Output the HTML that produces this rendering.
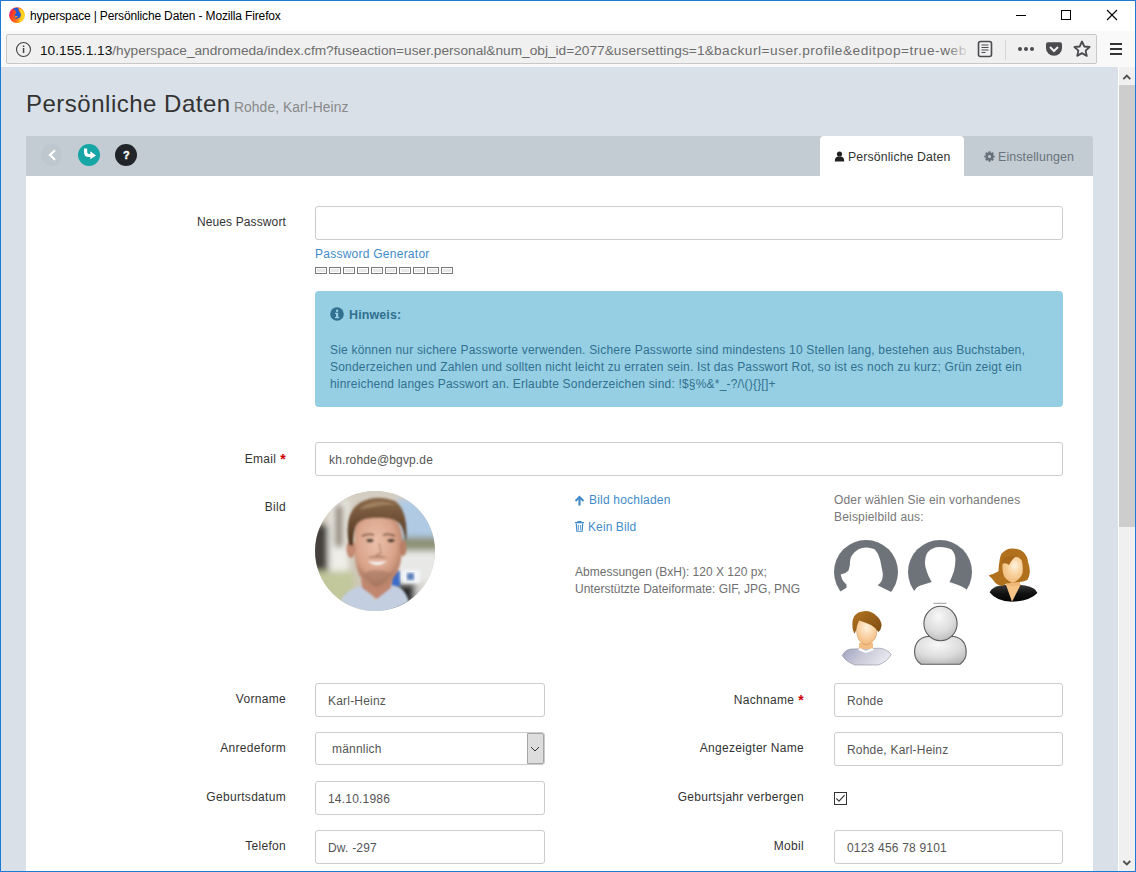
<!DOCTYPE html>
<html><head><meta charset="utf-8">
<style>
*{box-sizing:border-box;margin:0;padding:0}
html,body{width:1136px;height:872px;overflow:hidden;background:#fff;font-family:"Liberation Sans",sans-serif}
.a{position:absolute}
#win{position:absolute;left:0;top:0;width:1136px;height:872px;overflow:hidden}
#bd{position:absolute;left:0;top:0;width:1136px;height:872px;border:1px solid #1a7ad4}
.t{position:absolute;white-space:nowrap;line-height:1}
.lbl{position:absolute;white-space:nowrap;font-size:12px;color:#333;text-align:right;line-height:14px;letter-spacing:0.3px}
.inp{position:absolute;border:1px solid #ccc;border-radius:3px;background:#fff}
.val{position:absolute;white-space:nowrap;font-size:12px;color:#555;line-height:14px;letter-spacing:0.2px}
.req{color:#cc0000;font-weight:bold;margin-left:4px;font-size:14px;position:relative;top:1px}
</style></head><body>
<div id="win">
<!-- title bar -->
<div class="a" style="left:0;top:0;width:1134px;height:66px;background:#fff"></div>
<svg class="a" style="left:9px;top:7px" width="16" height="16" viewBox="0 0 16 16">
  <defs><linearGradient id="ff" x1="0" y1="0.3" x2="1" y2="0.7"><stop offset="0" stop-color="#d7158f"/><stop offset=".2" stop-color="#ff3a2a"/><stop offset=".55" stop-color="#ff6a1a"/><stop offset=".75" stop-color="#ffb21a"/><stop offset="1" stop-color="#ffd81f"/></linearGradient></defs>
  <circle cx="8" cy="8.2" r="7.9" fill="url(#ff)"/>
  <path d="M9.3 1 Q14.5 2.5 15.5 8 Q15 13 10.5 15 Q13 11 12 7 Q11 3 9.3 1Z" fill="#ffd21f"/>
  <path d="M3.8 2 Q6.5 0.6 9.3 0.85 L9.6 3.9 Q11.7 5.5 11.8 7.5 Q11.8 9.8 10.4 10.8 Q8.5 12.2 6.6 11.9 Q5.2 10 5.5 8.5 Q6.5 6.5 7.4 5.3 Q6.8 3.8 6 3.3 Q5 2.5 3.8 2Z" fill="#1e5ad8"/>
  <path d="M5.7 8.8 Q7.8 9 9 9.6 Q7.8 10.8 6.6 11.3Z" fill="#ff8a1a"/>
</svg>
<div class="t" style="left:30px;top:9.5px;font-size:12px;color:#000;letter-spacing:-0.15px">hyperspace | Persönliche Daten - Mozilla Firefox</div>
<div class="a" style="left:1016px;top:15px;width:10px;height:1px;background:#000"></div>
<div class="a" style="left:1061px;top:10px;width:10px;height:10px;border:1px solid #000"></div>
<svg class="a" style="left:1106px;top:9px" width="12" height="12" viewBox="0 0 12 12"><path d="M1 1L11 11M11 1L1 11" stroke="#000" stroke-width="1.1"/></svg>
<!-- toolbar -->
<div class="a" style="left:0;top:31px;width:1136px;height:36px;background:#f9f9fa"></div>
<div class="a" style="left:6px;top:34px;width:1091px;height:30px;background:#f0f0f0;border:1px solid #c8c8c8;border-radius:2px"></div>
<svg class="a" style="left:14.5px;top:40.5px" width="18" height="18" viewBox="0 0 18 18"><circle cx="8.5" cy="8.5" r="7" fill="none" stroke="#444" stroke-width="1.1"/><rect x="7.8" y="7" width="1.5" height="5" fill="#444"/><rect x="7.8" y="4.5" width="1.5" height="1.5" fill="#444"/></svg>
<div class="t" style="left:40px;top:44px;font-size:13.7px;color:#111;width:930px;overflow:hidden">10.155.1.13<span style="color:#6d6d6d">/hyperspace_andromeda/index.cfm?fuseaction=user.personal&amp;num_obj_id=2077<span style="letter-spacing:0.1px">&amp;usersettings=1&amp;</span><span style="letter-spacing:0.5px">backurl=user.profile&amp;editpop=true-web</span></span></div>
<div class="a" style="left:948px;top:38px;width:22px;height:22px;background:linear-gradient(90deg,rgba(240,240,240,0),#f0f0f0)"></div>
<svg class="a" style="left:977px;top:40px" width="17" height="18" viewBox="0 0 17 18"><rect x="1.5" y="1.5" width="13" height="15" rx="2" fill="none" stroke="#4a4a4f" stroke-width="1.6"/><path d="M4.5 5h7M4.5 7.5h7M4.5 10h7M4.5 12.5h4" stroke="#4a4a4f" stroke-width="1"/></svg>
<div class="a" style="left:1005px;top:40px;width:1px;height:20px;background:#d6d6d6"></div>
<svg class="a" style="left:1017px;top:45px" width="18" height="8" viewBox="0 0 18 8"><circle cx="3" cy="4" r="2" fill="#4a4a4f"/><circle cx="9" cy="4" r="2" fill="#4a4a4f"/><circle cx="15" cy="4" r="2" fill="#4a4a4f"/></svg>
<svg class="a" style="left:1045px;top:41px" width="18" height="16" viewBox="0 0 18 16"><path d="M1 3.3Q1 1.3 3 1.3H15Q17 1.3 17 3.3V7A8 7.8 0 0 1 1 7Z" fill="#4a4a4f"/><path d="M5 6l4 4 4-4" fill="none" stroke="#f0f0f0" stroke-width="2"/></svg>
<svg class="a" style="left:1073px;top:40px" width="18" height="18" viewBox="0 0 18 18"><path d="M9 1.5l2.3 5 5.3.5-4 3.6 1.2 5.3L9 13.1l-4.8 2.8 1.2-5.3-4-3.6 5.3-.5z" fill="none" stroke="#4a4a4f" stroke-width="1.8" stroke-linejoin="round"/></svg>
<div class="a" style="left:1110px;top:43px;width:12px;height:2px;background:#333"></div>
<div class="a" style="left:1110px;top:48px;width:12px;height:2px;background:#333"></div>
<div class="a" style="left:1110px;top:53px;width:12px;height:2px;background:#333"></div>

<!-- content -->
<div class="a" style="left:0;top:67px;width:1118px;height:804px;background:#d9e0e7"></div>
<!-- scrollbar -->
<div class="a" style="left:1118px;top:67px;width:1px;height:804px;background:#fff"></div>
<div class="a" style="left:1119px;top:67px;width:16px;height:804px;background:#f0f0f0"></div>
<div class="a" style="left:1119px;top:85px;width:16px;height:442px;background:#cdcdcd"></div>
<svg class="a" style="left:1122px;top:73px" width="10" height="8" viewBox="0 0 10 8"><path d="M1.3 6.2L4.8 2.7 8.3 6.2" fill="none" stroke="#505050" stroke-width="1.9"/></svg>
<svg class="a" style="left:1122px;top:858.5px" width="10" height="8" viewBox="0 0 10 8"><path d="M1.3 2L4.8 5.5 8.3 2" fill="none" stroke="#505050" stroke-width="1.9"/></svg>

<div class="t" style="left:26px;top:92px;font-size:24px;color:#333;letter-spacing:0.5px">Persönliche Daten</div>
<div class="t" style="left:234px;top:101px;font-size:13.8px;color:#888;letter-spacing:0.1px">Rohde, Karl-Heinz</div>

<!-- panel -->
<div class="a" style="left:26px;top:136px;width:1067px;height:40px;background:#c3ccd3;border-radius:0 3px 0 0"></div>
<div class="a" style="left:26px;top:176px;width:1067px;height:700px;background:#fff"></div>
<div class="a" style="left:41px;top:144px;width:21px;height:22px;border-radius:50%;background:#bec7ce"></div>
<svg class="a" style="left:46px;top:148px" width="12" height="14" viewBox="0 0 12 14"><path d="M9 2.2L4 7l5 4.8" fill="none" stroke="#fff" stroke-width="2.2"/></svg>
<div class="a" style="left:78px;top:144px;width:22px;height:22px;border-radius:50%;background:#17a6a6"></div>
<svg class="a" style="left:78px;top:144px" width="22" height="22" viewBox="0 0 22 22"><path d="M7.6 4.6V8.2Q7.6 11.5 11 11.5H13.5" fill="none" stroke="#fff" stroke-width="3.2"/><path d="M12.3 7.2L18 11.5L12.3 15.3Z" fill="#fff"/></svg>
<div class="a" style="left:115px;top:144px;width:22px;height:22px;border-radius:50%;background:#212529"></div>
<div class="t" style="left:123px;top:149.5px;font-size:11px;font-weight:bold;color:#fff;-webkit-text-stroke:0.4px #fff">?</div>

<!-- tabs -->
<div class="a" style="left:820px;top:136px;width:144px;height:40px;background:#fff;border-radius:4px 4px 0 0"></div>
<svg class="a" style="left:834px;top:151px" width="11" height="11" viewBox="0 0 11 11"><circle cx="5.5" cy="3" r="2.6" fill="#222"/><path d="M0.8 10.5c0-4 1.5-5 4.7-5s4.7 1 4.7 5z" fill="#222"/></svg>
<div class="t" style="left:848px;top:151px;font-size:12.3px;color:#333;letter-spacing:0.12px">Persönliche Daten</div>
<svg class="a" style="left:984px;top:151px" width="11" height="11" viewBox="0 0 11 11"><g fill="#68717a"><circle cx="5.5" cy="5.5" r="3.9"/><rect x="4.4" y="0.3" width="2.2" height="10.4" rx=".4"/><rect x="4.4" y="0.3" width="2.2" height="10.4" rx=".4" transform="rotate(45 5.5 5.5)"/><rect x="4.4" y="0.3" width="2.2" height="10.4" rx=".4" transform="rotate(90 5.5 5.5)"/><rect x="4.4" y="0.3" width="2.2" height="10.4" rx=".4" transform="rotate(135 5.5 5.5)"/></g><circle cx="5.5" cy="5.5" r="1.5" fill="#c3ccd3"/></svg>
<div class="t" style="left:998px;top:151px;font-size:12.4px;color:#6a737b;letter-spacing:0.12px">Einstellungen</div>

<!-- Neues Passwort -->
<div class="lbl" style="right:850px;top:215px;letter-spacing:0.12px">Neues Passwort</div>
<div class="inp" style="left:315px;top:206px;width:748px;height:34px"></div>
<div class="t" style="left:315px;top:248px;font-size:12px;color:#428bca;letter-spacing:0.25px">Password Generator</div>
<div class="a" style="left:315px;top:267px;width:140px;height:8px;display:flex;gap:2px">
  <div style="width:12px;height:7px;border:1px solid #7a7a7a;background:#e8e8e8;box-shadow:inset 0 0 0 1px #fff"></div>
  <div style="width:12px;height:7px;border:1px solid #7a7a7a;background:#e8e8e8;box-shadow:inset 0 0 0 1px #fff"></div>
  <div style="width:12px;height:7px;border:1px solid #7a7a7a;background:#e8e8e8;box-shadow:inset 0 0 0 1px #fff"></div>
  <div style="width:12px;height:7px;border:1px solid #7a7a7a;background:#e8e8e8;box-shadow:inset 0 0 0 1px #fff"></div>
  <div style="width:12px;height:7px;border:1px solid #7a7a7a;background:#e8e8e8;box-shadow:inset 0 0 0 1px #fff"></div>
  <div style="width:12px;height:7px;border:1px solid #7a7a7a;background:#e8e8e8;box-shadow:inset 0 0 0 1px #fff"></div>
  <div style="width:12px;height:7px;border:1px solid #7a7a7a;background:#e8e8e8;box-shadow:inset 0 0 0 1px #fff"></div>
  <div style="width:12px;height:7px;border:1px solid #7a7a7a;background:#e8e8e8;box-shadow:inset 0 0 0 1px #fff"></div>
  <div style="width:12px;height:7px;border:1px solid #7a7a7a;background:#e8e8e8;box-shadow:inset 0 0 0 1px #fff"></div>
  <div style="width:12px;height:7px;border:1px solid #7a7a7a;background:#e8e8e8;box-shadow:inset 0 0 0 1px #fff"></div>
</div>

<!-- alert -->
<div class="a" style="left:315px;top:291px;width:748px;height:116px;background:#96cfe4;border-radius:4px"></div>
<svg class="a" style="left:330px;top:307px" width="14" height="14" viewBox="0 0 14 14"><circle cx="7" cy="7" r="6.8" fill="#31708f"/><rect x="6" y="5.8" width="2.2" height="5" fill="#96cfe4"/><rect x="5" y="10" width="4.2" height="1.2" fill="#96cfe4"/><rect x="5" y="5.8" width="2" height="1.1" fill="#96cfe4"/><circle cx="7.1" cy="3.8" r="1.2" fill="#96cfe4"/></svg>
<div class="t" style="left:349px;top:309px;font-size:12.5px;font-weight:bold;color:#31708f;letter-spacing:0.1px">Hinweis:</div>
<div class="a" style="left:330px;top:341.7px;width:720px;font-size:12px;line-height:16.9px;color:#31708f;letter-spacing:0.19px;white-space:nowrap">Sie können nur sichere Passworte verwenden. Sichere Passworte sind mindestens 10 Stellen lang, bestehen aus Buchstaben,<br>Sonderzeichen und Zahlen und sollten nicht leicht zu erraten sein. Ist das Passwort Rot, so ist es noch zu kurz; Grün zeigt ein<br>hinreichend langes Passwort an. Erlaubte Sonderzeichen sind: !$§%&amp;*_-?/\(){}[]+</div>

<!-- Email -->
<div class="lbl" style="right:850px;top:451px">Email<span class="req">*</span></div>
<div class="inp" style="left:315px;top:442px;width:748px;height:34px"></div>
<div class="val" style="left:329px;top:453px;letter-spacing:0.15px">kh.rohde@bgvp.de</div>

<!-- Bild -->
<div class="lbl" style="right:850px;top:500px">Bild</div>
<svg class="a" style="left:315px;top:491px" width="120" height="120" viewBox="0 0 120 120">
  <defs>
    <clipPath id="cc"><circle cx="60" cy="60" r="60"/></clipPath>
    <filter id="bl" x="-20%" y="-20%" width="140%" height="140%"><feGaussianBlur stdDeviation="3"/></filter>
    <filter id="bl2"><feGaussianBlur stdDeviation="0.8"/></filter>
    <filter id="bl3"><feGaussianBlur stdDeviation="1.5"/></filter>
    <radialGradient id="skin" cx="45%" cy="38%" r="65%"><stop offset="0" stop-color="#ebc0aa"/><stop offset=".6" stop-color="#dba58c"/><stop offset="1" stop-color="#b07a62"/></radialGradient>
    <linearGradient id="hairg" x1="0" y1="0" x2="0" y2="1"><stop offset="0" stop-color="#8a6a4c"/><stop offset=".5" stop-color="#6c4d33"/><stop offset="1" stop-color="#4e3522"/></linearGradient>
  </defs>
  <g clip-path="url(#cc)">
    <rect width="120" height="120" fill="#cfc8ba"/>
    <g filter="url(#bl)">
      <rect x="-5" y="-5" width="130" height="20" fill="#d4cec2"/>
      <rect x="14" y="10" width="20" height="70" fill="#eeede8"/>
      <rect x="-5" y="34" width="18" height="46" fill="#45413a"/>
      <rect x="20" y="14" width="8" height="42" fill="#8a7e6a"/>
      <rect x="82" y="8" width="45" height="42" fill="#b0cae4"/>
      <rect x="84" y="46" width="40" height="14" fill="#8e9276"/>
      <rect x="80" y="60" width="45" height="32" fill="#e8e8e6"/>
      <rect x="-5" y="80" width="44" height="45" fill="#c2c79c"/>
      <rect x="78" y="92" width="22" height="30" fill="#2b2b2b"/>
      <rect x="100" y="94" width="25" height="30" fill="#d8d8d6"/>
    </g>
    <rect x="76" y="80" width="9" height="16" fill="#3a6cc8" filter="url(#bl3)"/>
    <rect x="87" y="79" width="18" height="13" fill="#f2f4f8" filter="url(#bl3)"/>
    <rect x="92" y="82" width="7" height="7" fill="#5a7fb8" filter="url(#bl3)"/>
    <g filter="url(#bl2)">
      <path d="M22 122 Q25 102 42 96 L50 94 L60 110 L76 94 L84 96 Q94 102 96 122Z" fill="#c3cfe0"/>
      <path d="M46 84 L47 97 L62 108 L76 97 L78 84Z" fill="#c08670"/>
      <path d="M40 46 Q39 30 50 26 Q63 22 76 26 Q87 32 87 48 Q88 70 82 82 Q74 95 62 96 Q50 95 44 84 Q38 70 40 46Z" fill="url(#skin)"/>
      <path d="M42 70 Q45 88 62 96 Q78 88 83 70 Q81 80 74 82 Q66 78 62 79 Q56 78 50 82 Q44 80 42 70Z" fill="#8e6450" opacity=".4"/>
      <path d="M52 67 Q62 62 73 67 Q62 66 52 67Z" fill="#8a5a46" opacity=".7"/>
      <ellipse cx="36" cy="58" rx="4.5" ry="9" fill="#c48a72"/>
      <ellipse cx="88" cy="57" rx="3.5" ry="8" fill="#b98068"/>
      <path d="M34 54 Q28 22 46 11 Q62 3 80 10 Q94 20 91 52 Q89 38 85 33 Q79 26 62 27 Q48 26 42 33 Q38 40 38 55 Z" fill="url(#hairg)"/>
      <path d="M44 18 Q60 6 82 14 Q70 13 58 16 Q50 18 44 18Z" fill="#a0805e"/>
      <path d="M53 70 Q62 78 72 70 Q62 72 53 70Z" fill="#f6f6f4"/>
      <ellipse cx="55" cy="49.5" rx="3.6" ry="1.8" fill="#3a2a22"/>
      <ellipse cx="76" cy="49.5" rx="3.6" ry="1.8" fill="#3a2a22"/>
      <path d="M47 45 Q53 42 59 44 M68 44 Q74 42 80 45" fill="none" stroke="#5e4230" stroke-width="1.6"/>
      <path d="M64 52 L66 62 Q64 64 61 63" fill="none" stroke="#b57e66" stroke-width="1.2"/>
    </g>
  </g>
</svg>
<svg class="a" style="left:574px;top:495px" width="12" height="11" viewBox="0 0 12 11"><path d="M5.5 0.5L0.8 5.2l1.5 1.5L4.4 4.6V10.5h2.2V4.6l2.1 2.1 1.5-1.5z" fill="#428bca"/></svg>
<div class="t" style="left:589px;top:494px;font-size:12px;color:#428bca;letter-spacing:0.2px">Bild hochladen</div>
<svg class="a" style="left:575px;top:521px" width="9" height="11" viewBox="0 0 9 11"><path d="M0 1.6h9M3 1.5V.5h3v1" fill="none" stroke="#428bca" stroke-width="1.1"/><path d="M1.3 2.5l.5 7.8h5.4l.5-7.8" fill="none" stroke="#428bca" stroke-width="1.1"/><path d="M3.3 4v5M5.7 4v5" stroke="#428bca" stroke-width=".9"/></svg>
<div class="t" style="left:588px;top:521px;font-size:12px;color:#428bca;letter-spacing:0.1px">Kein Bild</div>
<div class="a" style="left:575px;top:564px;font-size:12px;line-height:17px;color:#6f6f6f;white-space:nowrap;letter-spacing:0.01px">Abmessungen (BxH): 120 X 120 px;<br>Unterstützte Dateiformate: GIF, JPG, PNG</div>
<div class="a" style="left:834px;top:492px;font-size:12px;line-height:17px;color:#777;white-space:nowrap;letter-spacing:0.18px">Oder wählen Sie ein vorhandenes<br>Beispielbild aus:</div>

<!-- sample avatars -->
<svg class="a" style="left:834px;top:540px" width="64" height="56" viewBox="0 0 64 56">
  <circle cx="32" cy="32" r="32" fill="#6d7378"/>
  <path d="M7.2 51 L12.5 47.8 L12.5 44.5 Q8.5 41 7.9 38.6 L6.6 34.6 Q12 33.5 14.5 30.6 L15.8 25.4 Q16 17 18.4 14.8 Q24 7.5 31.7 7.5 Q38 8 40.9 9.5 Q45 14 46.2 20 L48.8 33.3 Q49 38 47.5 41.2 Q45.5 44 43.5 45.2 L56.7 51.8 L70 70 L-6 70 Z" fill="#fff"/>
</svg>
<svg class="a" style="left:908px;top:540px" width="64" height="56" viewBox="0 0 64 56">
  <circle cx="32" cy="32" r="32" fill="#6d7378"/>
  <path d="M6.5 50.5 Q9 46.5 11.8 45.8 L23.7 41.9 Q20 36 19 32 Q16.5 25 17 21.4 Q17.5 15 19.7 12.2 Q24 7 31.6 6.9 Q39 7 43.5 9.5 Q47 13 47.4 18.8 Q47.5 25 46.1 30.7 Q44 37 41.5 41.9 L48.8 44.5 Q54 46 58 49.1 L70 70 L-6 70 Z" fill="#fff"/>
</svg>
<svg class="a" style="left:980px;top:540px" width="70" height="70" viewBox="0 0 70 70">
  <defs>
    <linearGradient id="suit" x1="0" y1="0" x2="0" y2="1"><stop offset="0" stop-color="#3a3a3a"/><stop offset=".5" stop-color="#111"/><stop offset="1" stop-color="#050505"/></linearGradient>
    <radialGradient id="wface" cx="60%" cy="35%" r="70%"><stop offset="0" stop-color="#fff3e0"/><stop offset=".45" stop-color="#f9d3a0"/><stop offset="1" stop-color="#f0b878"/></radialGradient>
  </defs>
  <path d="M9.6 52.2 Q12 47 22 45.3 L25.7 45 L41 45 L45 45.5 Q56 47.5 57.4 53 Q50 61 32 61.8 Q16 61 9.6 52.2Z" fill="url(#suit)"/>
  <path d="M25.7 44 L32 61.8 L41 44 Z" fill="#f5c486"/>
  <path d="M26.5 41 L26.5 46 L40 46 L40 41Z" fill="#f0b878"/>
  <path d="M32.1 8.4 Q40 8.5 43.4 12 Q47.5 16 48.2 22.5 Q50 28 49.8 32.1 Q49.5 37 47.4 40.1 Q45 41.5 41.7 41.7 L26.5 43.4 Q24 45.5 21.7 45.8 Q18 45 16 43.4 Q13.5 41 12 38.5 Q10 37 8.8 35.3 Q14 34 18.5 31.3 Q18.5 26 19.3 22.5 Q20 16 21.7 13.6 Q26 8.5 32.1 8.4Z" fill="#b0701c"/>
  <path d="M22.5 25 Q23 18 30 17 Q38 15.5 41.5 20 Q43.5 26 42.5 33 Q41 39 32.5 43 Q26 40 24 36 Q22 32 22.5 25Z" fill="url(#wface)"/>
  <path d="M21.5 24 Q26 22 29 25 Q32 19 36.5 16 Q29 15 24 18 Q21.5 20 21.5 24Z" fill="#a8671a"/>
</svg>
<svg class="a" style="left:835px;top:600px" width="70" height="70" viewBox="0 0 70 70">
  <defs>
    <linearGradient id="shirt" x1="0" y1="0" x2="1" y2="0.3"><stop offset="0" stop-color="#9fa2c0"/><stop offset=".5" stop-color="#c9c9d8"/><stop offset="1" stop-color="#e6e6ee"/></linearGradient>
    <radialGradient id="mface" cx="50%" cy="30%" r="70%"><stop offset="0" stop-color="#fff0dc"/><stop offset=".6" stop-color="#f9d0a0"/><stop offset="1" stop-color="#f2b67a"/></radialGradient>
    <linearGradient id="mhair" x1="0" y1="0" x2="1" y2="1"><stop offset="0" stop-color="#b47420"/><stop offset="1" stop-color="#7a4a12"/></linearGradient>
  </defs>
  <path d="M7.2 55.4 Q10 50 16 49 L45 48.2 Q53 49.5 56.2 54.6 Q52 62 43.3 65 L20 65 Q10 61 7.2 55.4Z" fill="url(#shirt)" stroke="#8c8c9c" stroke-width=".6"/>
  <path d="M24 43 L24 49 L38 49 L38 43Z" fill="#f2be84"/>
  <path d="M25 48 L31 51 L37 48 L39 50 L31 53 L23 50Z" fill="#fff"/>
  <path d="M21.5 24 Q21 36 24 40 Q27 44.5 31.3 45 Q36 44 39.5 39.5 Q42.5 36 41.7 30 Q40 22 30 20 Q23 20 21.5 24Z" fill="url(#mface)" stroke="#c08a50" stroke-width=".4"/>
  <path d="M28.9 11.2 Q36 10.5 41.7 16 Q46.5 20 46.6 25.7 Q46 30 43.3 32.1 Q40 27 36 25 Q30 22 24 20.5 L22 26 Q21 32 19.3 33.7 Q17 29 17.3 24.1 Q17.5 19 19.3 16 Q23 11.5 28.9 11.2Z" fill="url(#mhair)"/>
</svg>
<svg class="a" style="left:905px;top:595px" width="70" height="80" viewBox="0 0 70 80">
  <defs><radialGradient id="gg" cx="45%" cy="30%" r="75%"><stop offset="0" stop-color="#f8f8f8"/><stop offset=".6" stop-color="#dcdcdc"/><stop offset="1" stop-color="#b8b8b8"/></radialGradient></defs>
  <path d="M28.4 8.3h12.9" stroke="#9a9a9a" stroke-width="1"/>
  <path d="M9.6 57 Q9.6 44 22 41.5 L49 41.5 Q61.2 44 61.2 57 Q61.2 65 55 69.2 L16 69.2 Q9.6 65 9.6 57Z" fill="url(#gg)" stroke="#5c5c5c" stroke-width="1.1"/>
  <ellipse cx="35.5" cy="28.5" rx="16.6" ry="17.2" fill="url(#gg)" stroke="#5c5c5c" stroke-width="1.1"/>
</svg>
<!-- lower rows -->
<div class="lbl" style="right:850px;top:692px">Vorname</div>
<div class="inp" style="left:315px;top:683px;width:230px;height:34px"></div>
<div class="val" style="left:328px;top:694px">Karl-Heinz</div>
<div class="lbl" style="right:332px;top:692px">Nachname<span class="req">*</span></div>
<div class="inp" style="left:834px;top:683px;width:229px;height:34px"></div>
<div class="val" style="left:847px;top:694px">Rohde</div>

<div class="lbl" style="right:850px;top:741px">Anredeform</div>
<div class="inp" style="left:315px;top:732px;width:230px;height:33px"></div>
<div class="a" style="left:527px;top:733px;width:17px;height:31px;background:#dddddd;border:1px solid #a6a6a6;border-radius:0 2px 2px 0"></div>
<svg class="a" style="left:530px;top:746px" width="10" height="6" viewBox="0 0 10 6"><path d="M1 1l4 4 4-4" fill="none" stroke="#333" stroke-width="1"/></svg>
<div class="val" style="left:332px;top:742px">männlich</div>
<div class="lbl" style="right:332px;top:741px">Angezeigter Name</div>
<div class="inp" style="left:834px;top:732px;width:229px;height:34px"></div>
<div class="val" style="left:847px;top:743px">Rohde, Karl-Heinz</div>

<div class="lbl" style="right:850px;top:790px">Geburtsdatum</div>
<div class="inp" style="left:315px;top:781px;width:230px;height:34px"></div>
<div class="val" style="left:328px;top:792px">14.10.1986</div>
<div class="lbl" style="right:332px;top:790px">Geburtsjahr verbergen</div>
<div class="a" style="left:834px;top:792px;width:13px;height:13px;border:1px solid #333;background:#fff"></div>
<svg class="a" style="left:834px;top:792px" width="13" height="13" viewBox="0 0 13 13"><path d="M2.3 6.4L5 9.2l5.6-6" fill="none" stroke="#333" stroke-width="1.1"/></svg>

<div class="lbl" style="right:850px;top:839px">Telefon</div>
<div class="inp" style="left:315px;top:830px;width:230px;height:34px"></div>
<div class="val" style="left:328px;top:841px">Dw. -297</div>
<div class="lbl" style="right:332px;top:839px">Mobil</div>
<div class="inp" style="left:834px;top:830px;width:229px;height:34px"></div>
<div class="val" style="left:847px;top:841px">0123 456 78 9101</div>
<div id="bd"></div>
</div>
</body></html>
